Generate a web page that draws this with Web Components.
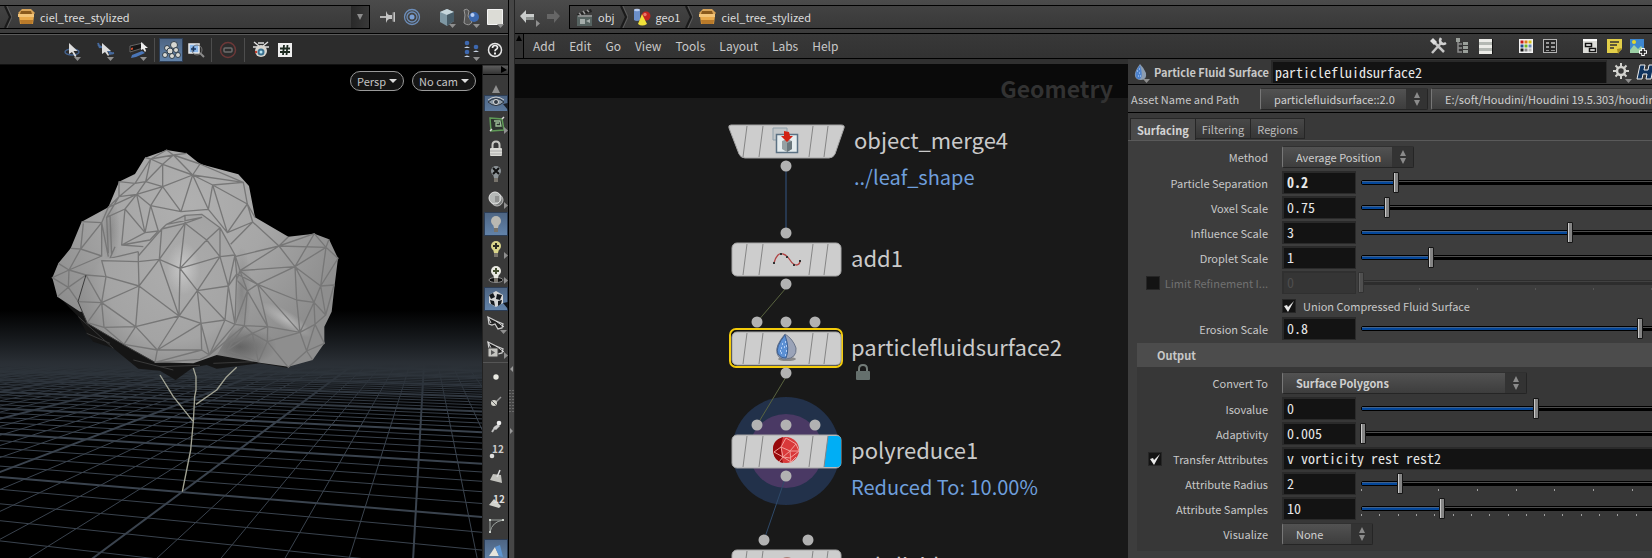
<!DOCTYPE html>
<html lang="en">
<head>
<meta charset="utf-8">
<title>ciel_tree_stylized</title>
<style>
html,body{margin:0;height:100%;background:#191919}
body{font-family:"Noto Sans CJK SC","Open Sans",sans-serif;font-size:11px;line-height:16px;color:#c8c8c8;overflow:hidden;
--mono:"Noto Sans Mono CJK SC","Liberation Mono",monospace}
</style>
</head>
<body>
<studio-app></studio-app>
<script>
const CARET='<path class="caret" d="M14 19h7l-3.5 4z" fill="#8f8f8f"/>';
const SIDE='<path d="M20 15v7l4-3.500z" fill="#8f8f8f"/>';
const BULB=(c)=>`<circle cx="12" cy="9" r="5" fill="${c}"/><path d="M9 12h6l-1 4h-4z" fill="${c}"/><path d="M10 16h4v4h-4z" fill="#77736b"/>`;
const GLASS='<path d="M4 5l4 2 4 2 7 3-1 4-4 1-3-5-3 1-3-1z" fill="#222" stroke="#ccc" stroke-width="1.300"/><path d="M12 9l8 6M4 5l3 6" stroke="#ddd" fill="none"/>';
const ICONS={
box:'<path d="M4 8l4-4h9l4 4-3 3H7z" fill="#d8a357"/><path d="M7 6h10l1 3H6z" fill="#8a5a1d"/><path d="M5 11h15l-1 8H6z" fill="#e9aa4c"/><path d="M4 9h16v3H4z" fill="#f3c478"/><path d="M6 15h13l-.5 4h-12z" fill="#b97a2a"/>',
clap:'<path d="M5 10h15v11H5z" fill="#566361"/><path d="M5 9l14-5 1 3-14 4z" fill="#222"/><path d="M7 8l2 2M11 6l2 3M15 5l2 2M6 11h14" stroke="#999" stroke-width="1.500"/><path d="M8 14h5v5H8zm6 2l4-2v4z" fill="#a4acaa"/>',
geo:'<path d="M4 5q3-2 6 0v10q-3 2-6 0z" fill="#6b8fc9"/><ellipse cx="7" cy="5" rx="3" ry="1.300" fill="#b9cdf0"/><circle cx="16" cy="11" r="4.500" fill="#c2251f"/><circle cx="15" cy="9.500" r="1.700" fill="#e8776a"/><path d="M12 9l5 10q-5 3-9 0z" fill="#efe03a"/>',
pin:'<path d="M4 12h7" stroke="#ddd" stroke-width="1.500"/><path d="M10 6q1 3 3 4h3V8l3-1v10l-3-1v-2h-3q-2 1-3 4z" fill="#c4c4c4"/><path d="M16 8h1.500v8H16z" fill="#666"/>',
target:'<g fill="none" stroke="#6c8db9" stroke-width="1.300"><circle cx="12" cy="12" r="7.500"/><circle cx="12" cy="12" r="5"/></g><circle cx="12" cy="12" r="2.500" fill="#7ba0d4"/>',
cube:'<path d="M5 7l7-3 7 3v9l-7 5-7-4z" fill="#7e97a3"/><path d="M5 7l7-3 7 3-7 3z" fill="#c6d6dc"/><path d="M12 10l7-3v9l-7 5z" fill="#475b66"/>'+CARET,
shapes:'<path d="M5 5q3-2 5 1l-1 5 4 6q-3 5-8 1l1-8z" fill="#555" stroke="#999"/><circle cx="15" cy="12" r="5" fill="#3c68ae"/><circle cx="13.500" cy="10" r="2" fill="#b7cdf3"/>'+CARET,
sheet:'<path d="M4.500 4.500h15v15h-15z" fill="#dcdcd6" stroke="#f4f4f4"/>'+CARET,
tumble:'<ellipse cx="12" cy="14" rx="7" ry="3" fill="none" stroke="#44628e" stroke-width="1.500"/><path d="M9 5v11l3-2 3 5 1.500-1-3-5h4z" fill="#ddd"/>'+CARET,
pan:'<path d="M5 7l15 9M5 5l2 5M16 16l5-1" stroke="#466a9e" stroke-width="2"/><path d="M9 5v11l3-2 3 4 1-1-2-4h4z" fill="#ddd"/>'+CARET,
dolly:'<path d="M4 8l13-3v5L4 14z" fill="#161616" stroke="#666"/><path d="M5 10l2-.5v2L5 12z" fill="#d34a2a"/><path d="M6 17l10-4 3 2-9 4-5 1z" fill="#4a76b8"/><path d="M15 4v8l2-1 2 3 1-1-1-3h3z" fill="#eee"/>'+CARET,
rocks:'<g fill="#d8d8d2" stroke="#33404c"><circle cx="8" cy="10" r="2.500"/><circle cx="15" cy="7" r="3.500"/><circle cx="11" cy="13" r="3"/><circle cx="17" cy="12" r="2.500"/><circle cx="6" cy="17" r="2.500"/><circle cx="13" cy="18" r="2.500"/><circle cx="19" cy="17" r="2.500"/></g>',
zoom:'<path d="M6 6h10v9H6z" fill="#8db9ec" stroke="#ececec" stroke-width="1.500"/><circle cx="14" cy="12" r="5" fill="none" stroke="#777"/><path d="M8 11h5M10.500 8.500v5" stroke="#16355f" stroke-width="1.500"/><path d="M17 15l4 4" stroke="#8c8c8c" stroke-width="2"/>',
stop:'<circle cx="12" cy="12" r="7.500" fill="none" stroke="#6d3838" stroke-width="1.500"/><rect x="8" y="10" width="8" height="4" rx="1" fill="none" stroke="#6c6c6c" stroke-width="1.500"/>',
orb:'<path d="M5 4l5 4M19 4l-5 4M4 9l6 0M20 9h-6M9 5h6" stroke="#ddd" stroke-width="1.500"/><circle cx="12" cy="13" r="6" fill="#d8d5cf"/><circle cx="12" cy="14" r="3.500" fill="#3a7190"/><circle cx="12" cy="14" r="1.500" fill="#b6e3f1"/><circle cx="7" cy="14" r="1.200" fill="#c23b2a"/>',
hash:'<path d="M5 5h14v14H5z" fill="#efefef"/><g stroke="#1d2a20" stroke-width="1.800" fill="none"><path d="M11 7l-1 10M14.500 7l-1 10M7 10.500h10M7 14h10"/></g>',
users:'<g fill="#3d68b0"><circle cx="8" cy="5" r="2.300"/><circle cx="17" cy="9" r="2.300"/><circle cx="8" cy="14" r="2.300"/></g><path d="M5 10q3-3 6 0zM14 14q3-3 6 0zM5 19q3-3 6 0z" fill="#c8d4e4"/>'+CARET,
help:'<circle cx="12" cy="12" r="6.500" fill="#262626" stroke="#e6e6e6" stroke-width="1.500"/><path d="M9.500 10q0-2.500 2.500-2.500t2.500 2q0 1.200-1.500 2-1 .6-1 1.700" fill="none" stroke="#eee" stroke-width="1.700"/><path d="M11 14.500h2v2h-2z" fill="#eee"/>',
eye:'<path d="M4 7q8-7 16 0-8 7-16 0z" fill="#8d9ba8" stroke="#2c333c"/><circle cx="12" cy="7" r="2.500" fill="#333c46" stroke="#ddd"/><path d="M4 5q8-6 16 0" stroke="#ccc" fill="none"/><path d="M19 9l5 6V8z" fill="#1b2027"/>',
up:'<path d="M8 16l4-8 4 8z" fill="#8f8f8f"/>',
snap:'<path d="M6 6l12 1 2 11-13 1z" fill="#2c332e" stroke="#5f9b57" stroke-width="1.500"/><path d="M10 9h6l1 5h-5v-3h3" fill="none" stroke="#9ec09a" stroke-width="1.300"/><path d="M6 19l2-2M18 7l2-2" stroke="#ddd" stroke-width="1.500"/>'+SIDE,
lock:'<path d="M8.500 11V8q0-3.500 3.500-3.500T15.500 8v3" fill="none" stroke="#c9c9c4" stroke-width="2"/><rect x="6" y="11" width="12" height="8" rx="1" fill="#dcdcd7"/><path d="M6 14h12M6 17h12" stroke="#aaa"/>',
bulbx:BULB('#8d9498')+'<path d="M9 6l6 6M15 6l-6 6" stroke="#111" stroke-width="2"/>',
disk:'<circle cx="13" cy="13" r="6" fill="#7a7d7c" stroke="#bcbcbc"/><circle cx="11" cy="11" r="6" fill="#b5b8b7" stroke="#e4e4e4"/><path d="M12 9v6M14 9v6" stroke="#6a6a6a"/>'+SIDE,
bulb:BULB('#b9b8b2'),
bulbp:BULB('#d9d58a')+'<path d="M9 9h6M12 6v6" stroke="#2b2b22" stroke-width="2"/>'+SIDE,
bulbg:'<ellipse cx="12" cy="18" rx="7" ry="2.500" fill="#111" stroke="#888"/>'+BULB('#e9e9e2')+'<path d="M9 9h6M12 6v6" stroke="#465032" stroke-width="2"/>'+SIDE,
ball:'<path d="M5 8l7-4 7 4v8l-7 4-7-4z" fill="#d7d7d7"/><path d="M5 8l4-2 2 4-4 2zM13 7l5 1-2 5-4-1zM6 13l4 1 1 5-4-2zM14 14l4-1-1 4-3 2z" fill="#15191e"/><path d="M19 16l5 6v-7z" fill="#10141a"/>',
glass:GLASS+'<path d="M16 18h7l-3.500 4z" fill="#8f8f8f"/>',
glass2:GLASS+'<rect x="4" y="11" width="10" height="9" rx="1" fill="#c4c4c0" stroke="#444"/><path d="M7 13v5l4-2.500z" fill="#555"/>'+SIDE,
dot:'<circle cx="12" cy="13" r="2.700" fill="#e9e9e2"/>',
norm:'<path d="M10 15l7-7" stroke="#999" stroke-width="1.500"/><circle cx="10" cy="14" r="3" fill="#d5d5cd"/><path d="M8 12l4 4" stroke="#666"/>',
point:'<path d="M8 18l4-6" stroke="#bbb" stroke-width="2"/><path d="M9 14l5-4 2 2-4 4z" fill="#ccc"/><circle cx="15" cy="9" r="2.300" fill="#eee"/>',
ptnum:'<circle cx="8" cy="17" r="2.300" fill="#ddd"/><text x="8" y="14" font-size="10" font-weight="700" fill="#ccc">12</text>',
prim:'<path d="M6 16l3-6 8 1 1 8z" fill="#c2c2bd"/><path d="M13 13l3-7" stroke="#ddd" stroke-width="1.500"/>',
primnum:'<path d="M5 16l5-6 7 7-2 2z" fill="#d3d3cd"/><text x="9" y="14" font-size="10" font-weight="700" fill="#ddd">12</text>',
curve:'<path d="M6 18V6h13M6 18Q8 8 19 6" fill="none" stroke="#9ea4a0"/><path d="M5 5h2v2H5zM18 5h2v2h-2zM5 17h2v2H5z" fill="#c9cfc9"/>',
shade:'<path d="M5 17l6-9 4 9z" fill="#e7e5dc"/><path d="M11 8l5-2 3 12-4-1z" fill="#5d94d1"/>',
back:'<path d="M4 11l6-6v4h8v6h-8v3z" fill="#c9cccb"/><path d="M10 12h8v3h-8z" fill="#8b908e"/>'+SIDE,
fwd:'<path d="M20 11l-6-6v4H7v5h7v4z" fill="#666"/>',
tools:'<path d="M6 19L16 8M9 9l9 9" stroke="#c6c6c6" stroke-width="2.500"/><path d="M4 7l3-3 4 4-3 3z" fill="#ddd"/><path d="M15 4q-2 3 0 5t5 0" fill="none" stroke="#d0d0d0" stroke-width="2.500"/>',
tree:'<path d="M8 6v12h4M8 10h4M8 14h4" stroke="#8c8c8c" stroke-width="1.500" fill="none"/><path d="M6 4h4v4H6zM13 8h5v3h-5zM13 12h5v3h-5zM13 16h5v3h-5z" fill="#9a9f9a"/>',
list:'<path d="M5 5h13v15H5z" fill="#ecece8"/><path d="M5 8h13v3H5zM5 14h13v3H5z" fill="#b4b8b3"/><path d="M18.500 5v15" stroke="#111"/>',
palette:'<path d="M5 5h14v14H5z" fill="#f4f4f4"/><path d="M6.500 6.500h3v3h-3z" fill="#c41515"/><path d="M10.500 6.500h3v3h-3z" fill="#dd7a18"/><path d="M14.500 6.500h3v3h-3z" fill="#d9c218"/><path d="M6.500 10.500h3v3h-3z" fill="#224b8c"/><path d="M10.500 10.500h3v3h-3z" fill="#72b61e"/><path d="M14.500 10.500h3v3h-3z" fill="#6484b4"/><path d="M6.500 14.500h3v3h-3z" fill="#111"/><path d="M10.500 14.500h3v3h-3z" fill="#888"/><path d="M14.500 14.500h3v3h-3z" fill="#bbb"/>',
grid:'<rect x="5.500" y="5.500" width="13" height="13" fill="#262626" stroke="#b5b5b5"/><path d="M8 8h3v2H8zM13 8h4v2h-4zM8 12h3v2H8zM13 12h4v2h-4zM8 16h3v1H8zM13 16h4v1h-4z" fill="#999"/>',
net:'<path d="M5 5h14v14H5z" fill="#dcdcd8"/><path d="M5 5h14v2H5z" fill="#fff"/><path d="M7.500 9.500h6v3h-6zM11.500 14.500h6v3h-6z" fill="#fff" stroke="#111" stroke-width="1.500"/>',
note:'<path d="M5 5h15v10l-4 4H5z" fill="#e2cf49"/><path d="M20 14l-5 1 1 5z" fill="#a68d20"/><path d="M8 8h9M8 11h7M8 14h4" stroke="#333" stroke-width="1.500"/>',
image:'<path d="M4 5h14v14H4z" fill="#3d87d0"/><path d="M4 16l4-5 4 4 3-3 3 4v3H4z" fill="#9ccfa4"/><circle cx="8" cy="8" r="2" fill="#e4d52f"/><path d="M17 14v8M13 18h8" stroke="#fff" stroke-width="3.500"/><path d="M17 15v6M14 18h6" stroke="#111" stroke-width="1.500"/>',
drop:'<path d="M10 4q-6 8-5 12t6 4q6 0 5-7-2-5-6-9z" fill="#8c9cb0"/><path d="M10 5q-6 8-4 12t5 1q2-3-1-13z" fill="#4d82cc"/><path d="M7 11h1M9 9h1M9 13h1M8 16h1M10 16h1" stroke="#c4dcff"/><path d="M13 19h7l-3.500 4z" fill="#8f8f8f"/>',
gear:'<circle cx="11" cy="11" r="4" fill="none" stroke="#d2d2ce" stroke-width="2.500"/><path d="M11 3v4M11 15v4M3 11h4M15 11h4M5.500 5.500l2.500 2.500M14 14l2.500 2.500M16.500 5.500L14 8M8 14l-2.500 2.500" stroke="#d2d2ce" stroke-width="2"/><path d="M15 19h7l-3.500 4z" fill="#8f8f8f"/>',
hou:'<path d="M6 5h5l-1 5h4l1-5h5l-3 14h-5l1-5H9l-1 5H3z" fill="#10345f" stroke="#eee"/>'
};
const NODE_ICONS={
merge:'<g transform="translate(-4)"><path d="M46 4h14v12H46z" fill="#c3c7c9" stroke="#8fa0aa"/><path d="M49.500 10.500h21v18h-21z" fill="#e5ecee" stroke="#5b7183" stroke-width="1.500"/><path d="M55 17l5-2 5 2v8l-5 3-5-3z" fill="#95a0a3"/><path d="M60 19l5-2v8l-5 3z" fill="#69767b"/><path d="M57 7l5 1 1 4h3l-6 6-6-6h3z" fill="#d22314"/></g>',
add:'<path d="M43 21q3-11 9-9 4 1 7 6t7 5q3-1 3-4" fill="none" stroke="#b04444" stroke-width="1.300"/><path d="M42 20h2v2h-2zM49 11h2v2h-2zM55 14h2v2h-2zM62 22h2v2h-2zM68 18h2v2h-2z" fill="#333"/>',
drop:'<ellipse cx="56" cy="28" rx="9" ry="2" fill="#888"/><path d="M54 3q-10 12-8 19t9 6q11-1 10-11-3-9-11-14z" fill="#9aa3b8" stroke="#6a7488"/><path d="M54 4q-10 12-7 19 4 5 8 4 4-9-1-23z" fill="#5c90d4" stroke="#3c5f92"/><path d="M51 13h1M54 11h1M50 17h1M53 16h1M55 20h1M50 22h1M54 24h1M49 20h1M55 15h1" stroke="#cde1ff" stroke-width="1.300"/>',
ball:'<circle cx="55" cy="16" r="13" fill="#d9393a"/><path d="M42 17q-1-11 10-14-2 6-2 12t2 14q-9-2-10-12z" fill="#98090c"/><path d="M55 4l-5 9 9 4 6-7-10-6M50 13l-7 5 9 5 7-6 9 0-9 7-7-1-4 5M59 17l1 12M65 10l3 7M52 23l8 5 5-5M50 13l2 10" fill="none" stroke="#f2a09b"/>',
sub:'<circle cx="56" cy="16" r="8" fill="#a98078"/>'
};
const define=(tag,render)=>customElements.define(tag,class extends HTMLElement{
 constructor(){super();this.attachShadow({mode:'open'})}
 connectedCallback(){this.shadowRoot.innerHTML=render(this)}
});
const A=(e,n,d='')=>e.getAttribute(n)??d;

define('ui-icon',e=>`<style>:host{display:block;width:24px;height:24px;flex:none}svg{display:block}</style>
<svg width="24" height="24" viewBox="0 0 24 24" aria-hidden="true">${ICONS[A(e,'name')]}</svg>`);

define('tool-button',e=>`<style>
:host{display:block;flex:none;width:24px;height:24px}
button{all:unset;box-sizing:border-box;display:grid;place-items:center;width:100%;height:100%}
:host([active]) button{background:linear-gradient(#4d6482,#6384ab);box-shadow:inset 0 0 0 1px #2c3d55}
</style><button type="button" aria-label="${A(e,'label')}"><ui-icon name="${A(e,'icon')}"></ui-icon></button>`);

define('crumb-item',e=>`<style>
:host{display:flex;align-items:center;flex:none;height:100%}
a{display:flex;align-items:center;gap:2px;color:#ddd;text-decoration:none;padding:0 5px 0 2px;white-space:nowrap}
svg{display:block;flex:none}:host([last]) svg{display:none}
</style><a href="#"><ui-icon name="${A(e,'icon')}"></ui-icon><slot></slot></a>
<svg width="8" height="22" viewBox="0 0 8 22"><path d="M1 0l5 11-5 11" fill="none" stroke="#1a1a1a" stroke-width="2"/><path d="M3 0l5 11-5 11" fill="none" stroke="#5c5c5c"/></svg>`);

define('select-box',e=>`<style>
:host{display:grid;height:22px;box-sizing:border-box;flex:none;border:1px solid #252525;border-top-color:#303030;border-left-color:#777;border-radius:2px;background:linear-gradient(#525252,#3d3d3d)}
select,svg{grid-area:1/1}
select{-webkit-appearance:none;appearance:none;display:block;margin:0;border:0;background:none;box-sizing:border-box;width:100%;height:20px;padding:0 0 0 13px;font:inherit;line-height:20px;color:#cfcfcf}
:host([bold]) select{font-weight:700}
svg{justify-self:end;pointer-events:none;background:#333}
</style><select aria-label="${A(e,'label')}"><option>${A(e,'value')}</option></select>
<svg width="21" height="20" viewBox="0 0 21 20"><path d="M8 9l3-6 3 6zM8 11h6l-3 6z" fill="#8b8b8b"/></svg>`);

define('value-slider',e=>{
 const min=+A(e,'min','0'),max=+A(e,'max','1'),v=+A(e,'value','0'),p=(v-min)/(max-min)*100;
 const n=+A(e,'ticks','0');
 return `<style>
:host{display:grid;flex:1;min-width:0;height:23px;align-items:center}
.track{grid-area:1/1;height:5px;margin:0 3px;box-sizing:border-box;border:1px solid #000;border-radius:2px;background:linear-gradient(#4d4d4d 0 1px,#000 1px)}
.fill{height:3px;width:${p}%;background:linear-gradient(#41618a 0 1px,#04479a 1px)}
.ticks{grid-area:1/1;display:flex;justify-content:space-between;align-self:end;margin:0 3px 4px;height:2px}
.ticks i{width:1px;background:#a0a0a0}
input{grid-area:1/1;-webkit-appearance:none;appearance:none;width:100%;height:23px;margin:0;background:none}
input::-webkit-slider-thumb{-webkit-appearance:none;width:6px;height:21px;background:linear-gradient(90deg,#c9c9c9 0 1px,#858585 1px);border:1px solid #151515;border-radius:1px;box-sizing:border-box}
:host([off]){opacity:.25}
</style><div class="track"><div class="fill"></div></div><div class="ticks">${'<i></i>'.repeat(n)}</div>
<input type="range" aria-label="${A(e,'label')}" min="${min}" max="${max}" step="any" value="${v}" ${e.hasAttribute('off')?'disabled':''}>`});

define('check-box',e=>`<style>
:host{display:block;flex:none;width:14px;height:14px}
input{-webkit-appearance:none;appearance:none;display:block;margin:0;width:14px;height:14px;background:#131313;border:1px solid #262626;box-sizing:border-box}
input:checked{background:#131313 url("data:image/svg+xml,%3Csvg xmlns='http://www.w3.org/2000/svg' viewBox='0 0 12 12'%3E%3Cpath d='M1 6l3-1 1 2 6-6-6 11z' fill='%23e8e8e8'/%3E%3C/svg%3E")}
</style><input type="checkbox" aria-label="${A(e,'label')}" ${e.hasAttribute('checked')?'checked':''}>`);

define('param-row',e=>{
 const l=A(e,'label'),c=A(e,'check');
 return `<style>
:host{display:grid;grid-template-columns:140px minmax(0,1fr);column-gap:14px;height:25px;align-items:center}
:host([tall]){height:29px;box-sizing:border-box;padding-top:3px}
:host([short]){height:21px}
.lab{display:flex;align-items:center;justify-content:flex-end;gap:5px;text-align:right;white-space:nowrap}
.lab check-box{margin-left:20px;margin-right:auto}
.val{display:flex;align-items:center;gap:2px;min-width:0}
input{width:74px;height:23px;box-sizing:border-box;flex:none;border:2px solid #2a2a2a;border-width:2px 1px 1px 2px;background:#131313;color:#e8e8e8;font:14px/18px var(--mono);padding:0 3px 2px;outline:0;margin:0}
:host([wide]) input{flex:1}
:host([bold]) input{font-weight:700}
:host([off]) label{color:#717171}
:host([off]) input{background:#353535;color:#4d4d4d;border-color:#303030}
</style>
<div class="lab">${e.hasAttribute('check')?`<check-box label="Enable ${l}" ${c}></check-box>`:''}${l?`<label for="f">${l}</label>`:''}</div>
<div class="val">${e.hasAttribute('value')?`<input id="f" type="text" value="${A(e,'value')}" ${e.hasAttribute('off')?'disabled':''}>`:''}<slot></slot></div>`});

define('net-node',e=>{
 const s=A(e,'shape'),ins=A(e,'ins').split(' ').filter(Boolean);
 const shape=s==='trap'?'<path d="M0 1h110q4 0 3 3l-9 26q-2 4-6 4H14q-4 0-6-4L-2 4q-1-3 2-3z" fill="#cdcdcd" stroke="#a4a4a4"/>':'<rect x="1" y="1" width="109" height="33" rx="5" fill="#cdcdcd" stroke="#a6a6a6"/>';
 return `<style>
:host{position:absolute;display:flex;align-items:flex-start;gap:10px;white-space:nowrap}
:host([shape=trap]){gap:13px}
svg{display:block;overflow:visible;flex:none}
.t{font-size:22px;line-height:36px;color:#cacaca;margin-top:-3px}
.s{font-size:20px;line-height:36px;color:#6f9fdc;display:block;margin-top:2px}
</style>
<svg width="110" height="35" viewBox="0 0 110 35">
${e.hasAttribute('selected')?'<rect x="-1" y="-2" width="112" height="38" rx="6" fill="#111" stroke="#f3cb0b" stroke-width="2"/>':''}
${shape}
${e.hasAttribute('display')?'<path d="M97 2h9q4 0 4 4v23q0 4-4 4H93z" fill="#00aef5"/>':''}
<path d="M16 2l-4 31M32 2l-4 31M82 2l-4 31M97 2l-4 31" stroke="#858585"/>
${NODE_ICONS[A(e,'icon')]}
<g fill="#b2b2b2">${ins.map(x=>`<circle cx="${x}" cy="-9" r="5.500"/>`).join('')}<circle cx="55" cy="42" r="5.500"/></g></svg>
<div><div class="t"><slot></slot></div><span class="s"><slot name="note"></slot></span></div>`});

define('view-port',e=>{
 const W=482,HY=310,V1=[427,HY],V2=[-2014,HY],O=[182,492],a=-.0962,b=.3115;let g='';
 const P=(u,v)=>{const w=1+u*a+v*b;return[(O[0]+u*a*V2[0]+v*b*V1[0])/w,(O[1]+u*a*V2[1]+v*b*V1[1])/w]};
 const f=n=>n.toFixed(1);
 for(let i=-6;i<75;i++){const p=P(0,i/5),m=(p[1]-HY)/(p[0]-V2[0]);
  g+=`<path d="M0 ${f(HY+m*(0-V2[0]))}L${W} ${f(HY+m*(W-V2[0]))}" stroke-width="${i%5?1:2}"/>`}
 for(let i=-170;i<35;i++){const p=P(i/5,0);if(1+i/5*a<=0)continue;
  const k=(600-HY)/(p[1]-HY);g+=`<path d="M${V1}L${f(V1[0]+(p[0]-V1[0])*k)} 600" stroke-width="${i%5?1:2}"/>`}
 const mesh=`M435,83 452,87 520,75 488,103 452,87 405,160 437,155 452,87 500,60 520,75 560,70M520,75 578,135 600,102 520,75M488,103 578,135 488,170 488,103 437,155 488,170 543,245 578,135 625,238 543,245 452,227 488,170 410,193 437,155M410,193 452,227 435,308 410,193M578,135 638,165 730,157 600,102M578,135 730,157M638,165 742,222 730,157M638,165 625,238 682,308 638,165M742,222 682,308 758,276 742,222 765,262M625,238 543,245M410,193 357,200 325,232 410,193 375,237 320,262 357,200 405,160 357,155 357,200M375,237 365,345M375,237 435,308 475,303 452,227M435,308 365,345 450,330 475,303M245,275 305,278 325,232M250,280 242,357 212,355M242,357 305,278 325,380M242,357 305,378 305,278M242,357 207,420 305,378M175,400 207,420 157,443 205,472 207,420 258,435 205,472 172,500M205,472 235,515M330,255 335,375M320,262 325,370M345,350 330,385 415,365M365,345 430,350M758,276 692,343M758,276 837,348 865,320M720,422 837,348 705,380M837,348 885,410 720,422M837,348 943,311 978,352 837,348M943,311 885,410 978,352 987,328M885,410 962,468 978,352 1014,385 962,468 1002,465 977,555 962,468 942,517 885,410 890,510 942,517 977,555 945,583 942,517 900,607 890,510 773,463 885,410M945,583 900,607 773,463 720,422M945,583 973,640 920,663 945,583M900,607 920,663 938,690M900,607 802,635 865,712 920,663M802,635 775,695 757,610 802,635 803,590 900,607M803,590 773,463 742,483 803,590 733,587 742,483 720,422 710,450 742,483 705,583M757,610 680,662 733,587 757,610 803,590M757,610 690,640M680,662 775,695M705,375 720,422M710,432 773,463`;
 const front=`M485,297 555,280 555,256M500,283 605,262 555,280 620,330 660,293M555,280 478,388 540,415 555,280M620,330 660,380 660,293 705,375 660,380 540,415 620,330M485,297 478,388 415,395 417,468 478,388 537,558 417,468 318,440 305,392 415,395 415,365M540,415 592,482 660,380 685,468 592,482 537,558 540,415M417,468 305,518 318,440 258,435M305,518 407,590 417,468M305,518 312,592 407,590 537,558 472,660 407,590 372,643 312,592 262,578 305,518 234,515M258,435 305,518M592,482 603,580 537,558M603,580 472,660 605,660 603,580 628,675 675,570 592,482M603,580 675,570 685,468 705,583 675,570M705,583 628,675 605,660 465,697 472,660 372,643M685,468 710,432 705,583M628,675 705,583 733,587 628,675M628,675 600,688 465,697M685,468 705,375M710,432 705,375M485,297 415,378M485,297 500,283 555,256 605,253 660,293`;
 return `<style>
:host{display:grid;min-width:0;min-height:0;background:#000;overflow:hidden}
svg,.cams{grid-area:1/1}
.scene{display:block;width:100%;height:100%;min-height:0}
.cams{z-index:1;display:flex;gap:8px;justify-self:end;align-self:start;padding:6px 6px}
button{all:unset;box-sizing:border-box;height:20px;border:1px solid #9a9a9a;border-radius:10px;background:#151515;color:#c4c4c4;display:flex;align-items:center;gap:3px;padding:0 6px;line-height:18px}
</style>
<svg class="scene" viewBox="0 65 482 493" preserveAspectRatio="xMidYMin slice" aria-label="3D viewport" role="img">
<defs>
<linearGradient id="fog" x1="0" y1="0" x2="0" y2="1"><stop offset="0" stop-color="#000"/><stop offset=".25" stop-color="#15181b"/><stop offset=".48" stop-color="#2a2f35"/><stop offset=".58" stop-color="#2a3036" stop-opacity=".8"/><stop offset=".75" stop-color="#1d2126" stop-opacity=".35"/><stop offset="1" stop-color="#000" stop-opacity="0"/></linearGradient>
<radialGradient id="dome" gradientUnits="userSpaceOnUse" cx="570" cy="220" r="480"><stop offset="0" stop-color="#b0b0b0"/><stop offset=".5" stop-color="#a6a6a6"/><stop offset="1" stop-color="#8e8e8e"/></radialGradient>
<radialGradient id="front" gradientUnits="userSpaceOnUse" cx="520" cy="430" r="340"><stop offset="0" stop-color="#acacac"/><stop offset=".6" stop-color="#a4a4a4"/><stop offset="1" stop-color="#828282"/></radialGradient>
<radialGradient id="hl"><stop offset="0" stop-color="#fff" stop-opacity=".35"/><stop offset="1" stop-color="#fff" stop-opacity="0"/></radialGradient>
<radialGradient id="sh"><stop offset="0" stop-color="#222" stop-opacity=".4"/><stop offset="1" stop-color="#222" stop-opacity="0"/></radialGradient>
</defs>
<g stroke="#3a434e" fill="none">${g}</g>
<rect x="0" y="60" width="482" height="251" fill="#000"/>
<rect x="0" y="310" width="482" height="110" fill="url(#fog)"/>
<g transform="translate(0 130) scale(.33333)" stroke-linejoin="round">
<path d="M480,735 520,800 580,875M580,714 588,740 588,780 584,800 580,875 572,960 560,1020 547,1085M710,712 680,740 650,780 588,823" fill="none" stroke="#a3a494" stroke-width="4"/>
<path d="M172,495 235,560 260,610 280,635 340,655 415,716 480,722 527,750 580,712 620,705 650,716 780,700 865,714 900,690 500,560 230,480z" fill="#151515"/>
<path d="M235,560L340,655M260,610L330,640M400,690L520,720M640,700L760,695M480,710L600,706" stroke="#3a3a3a" stroke-width="3"/>
<path d="M435,83 500,60 560,70 600,102 715,133 747,168 765,262 865,320 943,311 987,328 1014,385 1004,465 995,545 973,590 973,640 938,690 865,710 780,698 650,675 250,545 240,545 172,500 157,443 175,400 212,355 245,275 325,232 357,155 405,132z" fill="url(#dome)"/>
<ellipse cx="720" cy="650" rx="110" ry="60" fill="url(#sh)"/>
<ellipse cx="330" cy="300" rx="30" ry="100" fill="url(#sh)" opacity=".5"/>
<ellipse cx="725" cy="480" rx="30" ry="130" fill="url(#sh)" opacity=".5"/>
<ellipse cx="860" cy="570" rx="90" ry="26" transform="rotate(32 860 570)" fill="url(#hl)"/>
<path d="${mesh}" fill="none" stroke="#777" stroke-width="4"/>
<path d="M258,435 305,390 330,385 415,378 485,297 555,256 605,253 660,293 705,375 712,450 708,580 650,675 580,700 465,697 372,645 262,580 234,515z" fill="url(#front)"/>
<ellipse cx="550" cy="415" rx="50" ry="80" fill="url(#hl)"/>
<path d="${front}" fill="none" stroke="#777" stroke-width="4"/>
<path d="M258,435 234,515 262,580 372,645 465,697" fill="none" stroke="#3a3a3a" stroke-width="3"/>
</g></svg>
<div class="cams"><button type="button">Persp<svg width="8" height="4"><path d="M0 0h8L4 4z" fill="#ddd"/></svg></button><button type="button">No cam<svg width="8" height="4"><path d="M0 0h8L4 4z" fill="#ddd"/></svg></button></div>`});

define('scene-pane',()=>{
 const b=(i,l,x='')=>`<tool-button icon="${i}" label="${l}" ${x}></tool-button>`;
 return `<style>
:host{display:grid;grid-template-rows:34px 31px minmax(0,1fr);min-width:0;min-height:0;background:#3a3a3a}
.path{display:flex;align-items:center;background:linear-gradient(#4b4b4b,#3b3b3b);border-bottom:1px solid #000;box-sizing:border-box;padding-right:1px}
.crumbs{flex:1;min-width:0;height:24px;box-sizing:border-box;border:1px solid #000;border-left:0;display:flex;align-items:center;background:linear-gradient(#424242,#393939);margin-right:6px}
.crumbs .chev{flex:none;margin-left:4px}
.crumbs span{flex:1}
.crumbs button{all:unset;width:18px;height:22px;background:linear-gradient(90deg,#292929,#393939);display:grid;place-items:center}
.path i{width:11px;flex:none}
.tools{display:flex;align-items:center;background:#2c2c2c;border-top:1px solid #5a5a5a;border-bottom:1px solid #111;box-sizing:border-box;padding:0 1px 0 60px}
.tools .g{display:flex;gap:9px}
.tools hr{margin:0 4px;border:0;width:1px;height:24px;background:#4d4d4d;flex:none}
.tools span{flex:1}
.body{display:grid;grid-template-columns:minmax(0,1fr) 26px;min-height:0}
nav{display:flex;flex-direction:column;align-items:center;gap:1px;background:#393939;overflow:hidden;min-height:0;border-left:1px solid #222}
nav .top{align-self:stretch;flex:none;height:8px;margin:1px 0 0;background:linear-gradient(#5c5c5c,#333);border-bottom:1px solid #000}
nav .top svg{display:block;margin-left:auto}
nav .half{height:16px;overflow:hidden;flex:none;display:block}
nav .half.up{margin:1px 0}
nav hr{border:0;align-self:stretch;flex:none;height:1px;margin:0;background:#555}
</style>
<div class="path"><div class="crumbs"><svg class="chev" width="8" height="22"><path d="M1 0l5 11-5 11" fill="none" stroke="#1a1a1a" stroke-width="2"/><path d="M3 0l5 11-5 11" fill="none" stroke="#5c5c5c"/></svg><crumb-item icon="box" last>ciel_tree_stylized</crumb-item><span></span><button type="button" aria-label="Path history"><svg width="8" height="6"><path d="M1 0h6L4 6z" fill="#8d8d8d"/></svg></button></div>
${b('pin','Pin')}${b('target','Follow selection')}<i></i>${b('cube','Geometry')}${b('shapes','Objects')}${b('sheet','Background')}</div>
<div class="tools"><div class="g">${b('tumble','Tumble')}${b('pan','Pan')}${b('dolly','Dolly')}</div><hr>${b('rocks','Scene','active')}${b('zoom','Zoom region')}<hr>${b('stop','Disabled')}<hr>${b('orb','Render')}${b('hash','Grid')}<span></span>${b('users','Users')}${b('help','Help')}</div>
<div class="body"><view-port></view-port><nav><div class="top"><svg width="8" height="7"><path d="M1 0v7l6-3z" fill="#000"/></svg></div>
<div class="half up">${b('up','Scroll up')}</div><div class="half">${b('eye','Visibility','active')}</div>
${b('snap','Snap')}${b('lock','Lock')}${b('bulbx','No lighting')}${b('disk','Material')}${b('bulb','Headlight','active')}${b('bulbp','Add light')}${b('bulbg','Ground light')}${b('ball','Shading','active')}${b('glass','Ghosting')}${b('glass2','Flipbook')}<hr>
${b('dot','Points')}${b('norm','Normals')}${b('point','Point trails')}${b('ptnum','Point numbers')}${b('prim','Primitive normals')}${b('primnum','Primitive numbers')}${b('curve','Hulls')}${b('shade','Shaded','active')}</nav></div>`});

define('network-view',()=>`<style>
:host{display:block;position:relative;min-width:0;overflow:hidden;background:linear-gradient(#0a0a0a 0 34px,#191919 34px)}
h2{margin:0;padding:6px 15px 0;font-size:23px;line-height:36px;color:#323232;text-align:right}
.wires,.lock{position:absolute;left:0;top:0}.wires{overflow:visible}
.lock{left:340px;top:300px}
</style><h2>Geometry</h2>
<svg class="wires" width="613" height="494"><circle cx="271" cy="387" r="54" fill="#22314a"/><circle cx="271" cy="387" r="37" fill="#4a3964"/>
<path d="M271 102v67" stroke="#2b4261" stroke-width="1.500"/><path d="M271 224l-29 34M271 313l-29 48" stroke="#5a6440"/><path d="M271 412l-22 64" stroke="#2f4a6a"/></svg>
<net-node style="left:216px;top:60px" shape="trap" icon="merge">object_merge4<span slot="note">../leaf_shape</span></net-node>
<net-node style="left:216px;top:178px" icon="add" ins="55">add1</net-node>
<net-node style="left:216px;top:267px" icon="drop" ins="26 55 84" selected>particlefluidsurface2</net-node>
<svg class="lock" width="16" height="18"><path d="M4 8V5q0-4 4-4t4 4v3" fill="none" stroke="#737c79" stroke-width="2"/><rect x="1" y="7" width="14" height="9" rx="1" fill="#65706d"/></svg>
<net-node style="left:216px;top:370px" icon="ball" ins="26 55 84" display>polyreduce1<span slot="note">Reduced To: 10.00%</span></net-node>
<net-node style="left:216px;top:485px" icon="sub" ins="33 77">subdivide1</net-node>`);

define('param-pane',()=>{
 const r=(l,v,min,max,s='',t=0)=>`<param-row label="${l}" value="${v}" ${s}><value-slider label="${l} slider" value="${v}" min="${min}" max="${max}" ${t?`ticks="${t}"`:''} ${s.includes('off')?'off':''}></value-slider></param-row>`;
 return `<style>
:host{display:block;min-width:0;overflow:hidden;background:#3d3d3d}
.wide{width:calc(100% + 61px)}
.name{display:flex;align-items:center;height:26px;border-bottom:1px solid #000;box-sizing:border-box;padding-left:2px;background:#383838;width:calc(100% + 6px)}
.name b{margin-right:2px;white-space:nowrap}
.name input{flex:1;min-width:0;height:23px;box-sizing:border-box;border:2px solid #292929;border-width:2px 1px 0 2px;background:#131313;color:#e8e8e8;font:14px/20px var(--mono);padding:0 2px 1px;margin-right:3px;outline:0}
.asset{display:flex;align-items:center;gap:3px;height:28px;border-bottom:1px solid #000;box-sizing:border-box;padding:1px 0 0 3px;white-space:nowrap}
.asset label{width:126px;flex:none}
.asset .w{width:168px}.asset .p{width:320px}
.tabs{display:flex;height:28px;box-sizing:border-box;padding:5px 0 0 2px;border-bottom:1px solid #5a5a5a;background:#393939}
.tabs button{all:unset;box-sizing:border-box;height:21px;line-height:20px;padding:0 6px;border:1px solid #262626;border-left-width:0;background:linear-gradient(#484848,#363636);color:#bcbcbc}
.tabs button[aria-selected=true]{background:#4a4a4a;font-weight:700;color:#d4d4d4;height:22px;border-bottom:0;border-left-width:1px}
.u{display:flex;align-items:center;gap:7px}
h3{margin:2px 0 0 9px;height:24px;line-height:24px;padding-left:20px;font-size:11px;background:#4c4c4c}
.out{margin-left:9px;background:#373737;padding-bottom:5px}
.out param-row{margin-left:-9px}
.m{width:132px}.c{width:245px}.v{width:91px}
</style>
<div class="name"><ui-icon name="drop"></ui-icon><b>Particle Fluid Surface</b><input aria-label="Node name" value="particlefluidsurface2"><ui-icon name="gear"></ui-icon><ui-icon name="hou"></ui-icon></div>
<div class="asset"><label>Asset Name and Path</label><select-box class="w" label="Asset name" value="particlefluidsurface::2.0"></select-box><select-box class="p" label="Asset path" value="E:/soft/Houdini/Houdini 19.5.303/houdini/"></select-box></div>
<div class="tabs" role="tablist"><button role="tab" aria-selected="true">Surfacing</button><button role="tab">Filtering</button><button role="tab">Regions</button></div>
<div class="wide">
<param-row label="Method" tall><select-box class="m" label="Method" value="Average Position"></select-box></param-row>
${r('Particle Separation','0.2',0,2,'bold')}${r('Voxel Scale','0.75',0,10)}${r('Influence Scale','3',0,5)}${r('Droplet Scale','1',0,5)}${r('Limit Refinement I...','0',0,6,'off check',7)}
<param-row short><label class="u"><check-box label="Union Compressed Fluid Surface" checked></check-box>Union Compressed Fluid Surface</label></param-row>
${r('Erosion Scale','0.8',0,1)}
<h3>Output</h3><div class="out">
<param-row label="Convert To" tall><select-box bold class="c" label="Convert To" value="Surface Polygons"></select-box></param-row>
${r('Isovalue','0',-1,1)}${r('Adaptivity','0.005',0,1)}
<param-row label="Transfer Attributes" value="v vorticity rest rest2" wide check="checked"></param-row>
${r('Attribute Radius','2',1,10,'',10)}${r('Attribute Samples','10',1,40,'',20)}
<param-row label="Visualize"><select-box class="v" label="Visualize" value="None"></select-box></param-row>
</div></div>`});

define('network-pane',()=>{
 const b=(i,l)=>`<tool-button icon="${i}" label="${l}"></tool-button>`;
 return `<style>
:host{display:grid;grid-template-rows:34px 25px minmax(0,1fr);min-width:0;min-height:0;background:#3a3a3a}
.path{display:flex;align-items:center;background:linear-gradient(#4b4b4b,#3b3b3b);border-bottom:1px solid #000;box-sizing:border-box;padding-left:1px}
.path .crumbs{flex:1;margin-left:5px;height:24px;box-sizing:border-box;border:1px solid #000;border-right:0;display:flex;align-items:center;background:linear-gradient(#424242,#393939)}
.menu{display:flex;align-items:center;background:linear-gradient(#383838,#323232);border-bottom:1px solid #000;box-sizing:border-box;padding-right:2px;font-size:12px}
.menu .grip{align-self:stretch;width:8px;border-right:1px solid #000;background:#333;margin-right:9px}
.menu .grip svg{display:block;margin:1px}
.menu button{all:unset;margin-right:14px}
.menu span{flex:1}.menu i{width:16px}
.main{display:grid;grid-template-columns:minmax(0,613fr) minmax(0,524fr);min-height:0}
.net{display:grid;padding-top:5px;background:#303030;min-width:0;min-height:0}
</style>
<div class="path">${b('back','Back')}${b('fwd','Forward')}<div class="crumbs"><crumb-item icon="clap">obj</crumb-item><crumb-item icon="geo">geo1</crumb-item><crumb-item icon="box" last>ciel_tree_stylized</crumb-item></div></div>
<div class="menu"><div class="grip"><svg width="6" height="7"><path d="M0 6l3-6 3 6z"/></svg></div>${['Add','Edit','Go','View','Tools','Layout','Labs','Help'].map(t=>`<button type="button">${t}</button>`).join('')}<span></span>
${b('tools','Tools')}${b('tree','Tree view')}${b('list','List view')}<i></i>${b('palette','Palette')}${b('grid','Grid')}<i></i>${b('net','Network box')}${b('note','Sticky note')}${b('image','Background image')}</div>
<div class="main"><div class="net"><network-view></network-view></div><param-pane></param-pane></div>`});

define('studio-app',()=>`<style>
:host{display:grid;grid-template-columns:minmax(0,508fr) 7px minmax(0,1137fr);grid-template-rows:minmax(0,1fr);height:100vh}
.split{background:#464646;border-left:1px solid #000;border-right:1px solid #242424;display:flex;align-items:flex-end;min-height:0}
.split svg{display:block;margin-bottom:120px}
</style><scene-pane></scene-pane><div class="split"><svg width="5" height="75"><path d="M4 3v6L1 6zM1 65v6l3-3z" fill="#999"/><path d="M1 27v22M4 27v22" stroke="#8d8d8d" stroke-dasharray="1 2"/></svg></div><network-pane></network-pane>`);
</script>
</body>
</html>
